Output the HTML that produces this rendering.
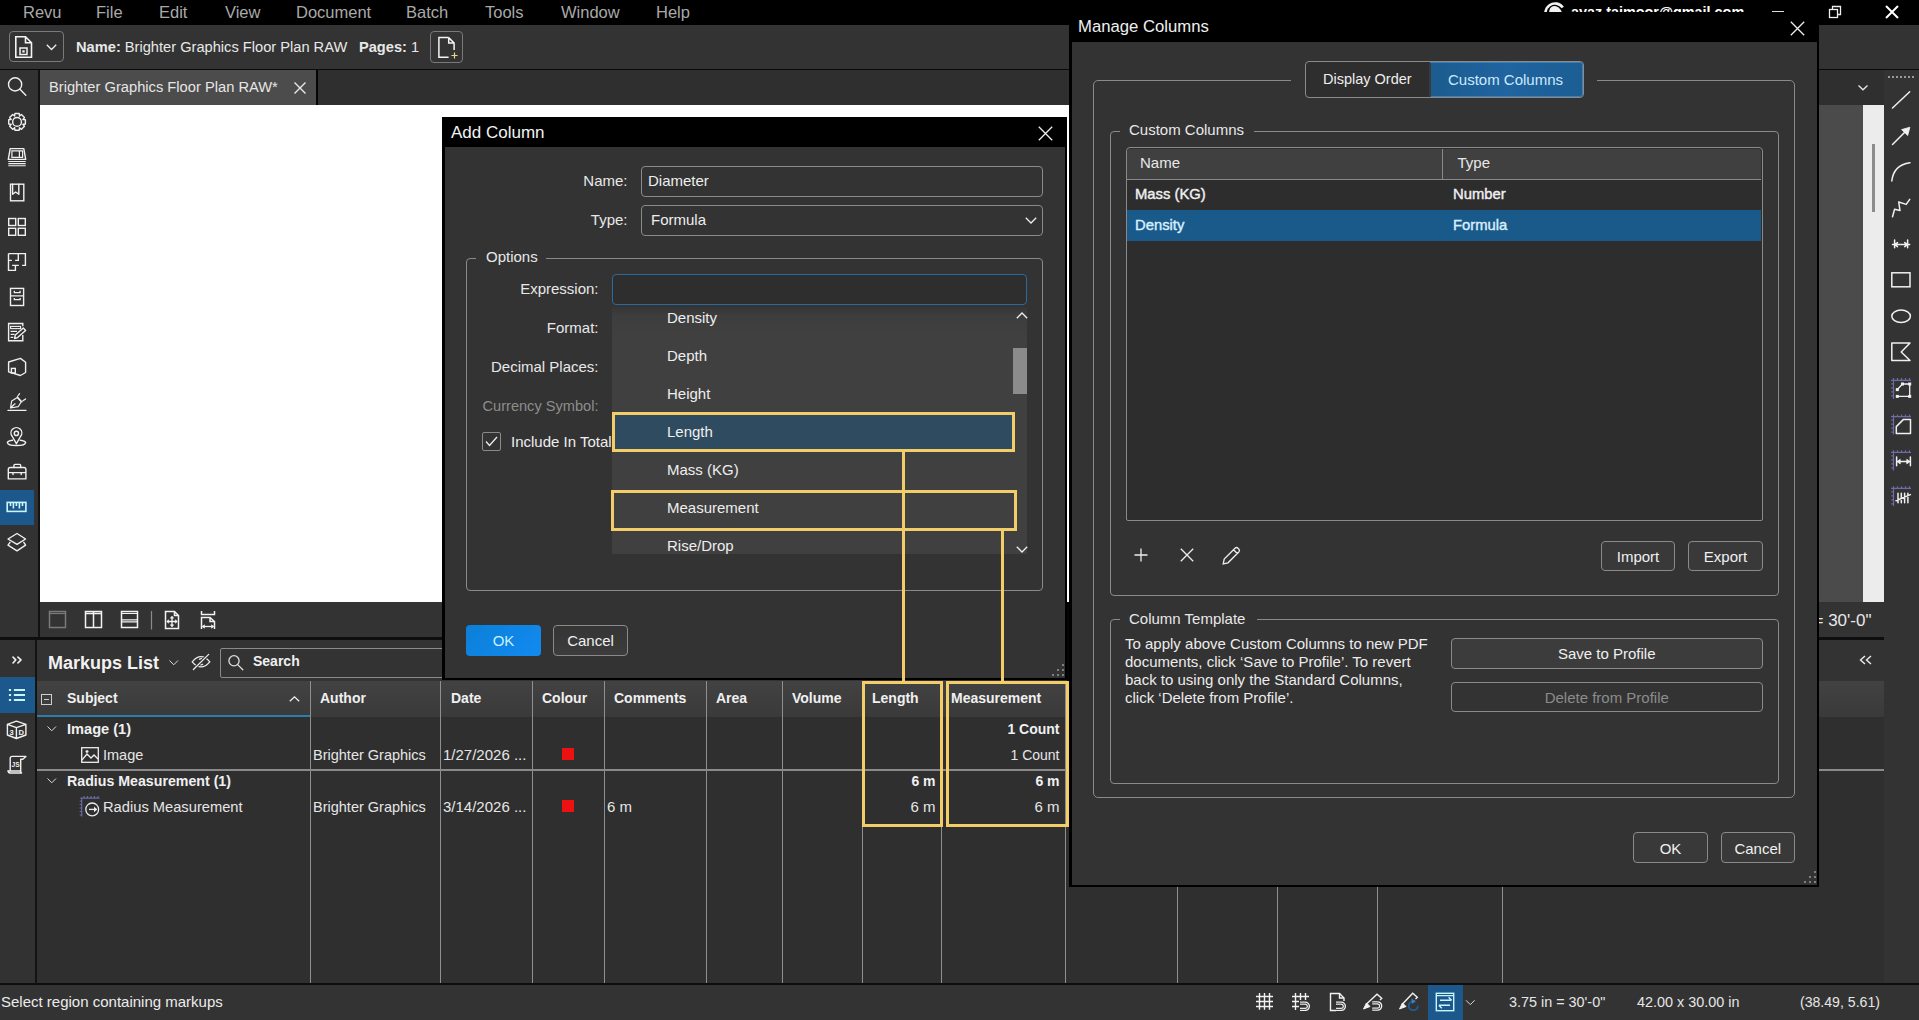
<!DOCTYPE html>
<html><head><meta charset="utf-8">
<style>
*{box-sizing:border-box}
html,body{margin:0;padding:0}
body{width:1919px;height:1020px;overflow:hidden;position:relative;background:#333;font-family:"Liberation Sans",sans-serif;color:#eee;font-size:15px}
.a{position:absolute}
.t{position:absolute;white-space:nowrap;line-height:1}
svg{position:absolute;overflow:visible}
svg .s{fill:none;stroke:#eee;stroke-width:1.3}
</style></head><body>
<div class="a" style="left:0px;top:0px;width:1919px;height:25px;background:#000;"></div>
<div class="t" style="left:23px;top:4.03px;font-size:16.5px;color:#a9a9a9;font-weight:400;">Revu</div>
<div class="t" style="left:96px;top:4.03px;font-size:16.5px;color:#a9a9a9;font-weight:400;">File</div>
<div class="t" style="left:159px;top:4.03px;font-size:16.5px;color:#a9a9a9;font-weight:400;">Edit</div>
<div class="t" style="left:225px;top:4.03px;font-size:16.5px;color:#a9a9a9;font-weight:400;">View</div>
<div class="t" style="left:296px;top:4.03px;font-size:16.5px;color:#a9a9a9;font-weight:400;">Document</div>
<div class="t" style="left:406px;top:4.03px;font-size:16.5px;color:#a9a9a9;font-weight:400;">Batch</div>
<div class="t" style="left:485px;top:4.03px;font-size:16.5px;color:#a9a9a9;font-weight:400;">Tools</div>
<div class="t" style="left:561px;top:4.03px;font-size:16.5px;color:#a9a9a9;font-weight:400;">Window</div>
<div class="t" style="left:656px;top:4.03px;font-size:16.5px;color:#a9a9a9;font-weight:400;">Help</div>
<div class="a" style="left:1540px;top:0;width:230px;height:12px;overflow:hidden">
<svg style="left:3px;top:0" width="24" height="24" viewBox="0 0 24 24"><g transform="rotate(-35 12 13)"><path d="M2.5 13 A9.5 9.5 0 0 1 21.5 13" fill="none" stroke="#f2f2f2" stroke-width="2.6"/><ellipse cx="12.5" cy="13.5" rx="6" ry="7.5" fill="#f2f2f2"/></g></svg>
<div class="t" style="left:31px;top:4.81px;font-size:14.4px;font-weight:700;color:#fff">ayaz.taimoor@gmail.com</div>
</div>
<div class="a" style="left:1772px;top:11px;width:12px;height:1.3000000000000007px;background:#ddd;"></div>
<svg style="left:1828px;top:5px;" width="14" height="14" viewBox="0 0 14 14"><rect x="1.5" y="4.5" width="8" height="8" class="s" stroke-width="1.3"/><path d="M4.5 4.5 V1.5 H12.5 V9.5 H9.5" class="s" stroke-width="1.3"/></svg>
<svg style="left:1885px;top:5px;" width="14" height="14" viewBox="0 0 14 14"><path d="M1 1 L13 13 M13 1 L1 13" stroke="#fff" stroke-width="2" fill="none"/></svg>
<div class="a" style="left:0px;top:25px;width:1919px;height:44px;background:#333;"></div>
<div class="a" style="left:0px;top:68.5px;width:1919px;height:1.5px;background:#0a0a0a;"></div>
<div class="a" style="left:40px;top:70px;width:1844px;height:35px;background:#2f2f2f;"></div>
<div class="a" style="left:9px;top:31px;width:55px;height:31px;border:1px solid #7a7a7a;border-radius:4px;"></div>
<svg style="left:15px;top:36px;" width="18" height="22" viewBox="0 0 18 22"><path d="M0.8 0.8 H10.5 L16.5 6.8 V21.2 H0.8 Z M10.5 0.8 V6.8 H16.5" fill="none" stroke="#f4f4f4" stroke-width="1.6"/><rect x="5" y="12" width="7" height="6.5" fill="none" stroke="#f4f4f4" stroke-width="1.5"/><rect x="7.3" y="14.3" width="2.4" height="2.2" fill="#f4f4f4"/></svg>
<svg style="left:46px;top:44px;" width="11" height="7" viewBox="0 0 11 7"><path d="M0.8 0.8 L5.5 5.5 L10.2 0.8" class="s" stroke-width="1.3"/></svg>
<div class="t" style="left:76px;top:39.6px;font-size:14.65px;color:#e8e8e8;font-weight:400;"><b>Name:</b> Brighter Graphics Floor Plan RAW</div>
<div class="t" style="left:359px;top:39.64px;font-size:14.6px;color:#e8e8e8;font-weight:400;"><b>Pages:</b> 1</div>
<div class="a" style="left:430px;top:31px;width:33px;height:32px;border:1px solid #7a7a7a;border-radius:4px;"></div>
<svg style="left:0px;top:0px;" width="600" height="80" viewBox="0 0 600 80"><path d="M448.7 37.6 H438.9 V57.3 H448.6 M448.7 37.6 L454.1 43 V50 M448.7 37.6 V43 H454.1" fill="none" stroke="#f4f4f4" stroke-width="1.5"/><path d="M454.5 52.4 V58.6 M451.4 55.5 H457.6" stroke="#e9d68a" stroke-width="1.2" fill="none"/></svg>
<div class="a" style="left:40px;top:70px;width:276px;height:35px;background:#4c4c4c;"></div>
<div class="a" style="left:316px;top:70px;width:1.5px;height:35px;background:#050505;"></div>
<div class="t" style="left:49px;top:79.56px;font-size:14.7px;color:#e6e6e6;font-weight:400;">Brighter Graphics Floor Plan RAW*</div>
<svg style="left:293.5px;top:82px;" width="12" height="12" viewBox="0 0 12 12"><path d="M0.5 0.5 L11.5 11.5 M11.5 0.5 L0.5 11.5" class="s" stroke-width="1.1"/></svg>
<svg style="left:1858px;top:84.5px;" width="10" height="6" viewBox="0 0 10 6"><path d="M0.5 0.5 L5 4.8 L9.5 0.5" fill="none" stroke="#e6e6e6" stroke-width="1.3"/></svg>
<div class="a" style="left:0px;top:70px;width:38px;height:567px;background:#323232;"></div>
<div class="a" style="left:38px;top:70px;width:2px;height:567px;background:#121212;"></div>
<div class="a" style="left:40px;top:105px;width:1030px;height:497px;background:#ffffff;"></div>
<div class="a" style="left:1070px;top:105px;width:793px;height:497px;background:#4b4b4b;"></div>
<div class="a" style="left:1863px;top:105px;width:21px;height:497px;background:#ececec;"></div>
<div class="a" style="left:1872px;top:144px;width:3px;height:68px;background:#8c8c8c;"></div>
<div class="a" style="left:1884px;top:70px;width:35px;height:913px;background:#333;"></div>
<div class="a" style="left:1888px;top:76px;width:27px;height:2px;background-image:linear-gradient(90deg,#9a9a9a 50%,transparent 50%);background-size:4px 2px"></div>
<div class="a" style="left:40px;top:602px;width:1844px;height:35px;background:#333;"></div>
<div class="a" style="left:0px;top:637px;width:1884px;height:3px;background:#0e0e0e;"></div>
<div class="t" style="left:1813.5px;top:611.61px;font-size:17px;color:#e8e8e8;font-weight:400;">= 30'-0"</div>
<div class="a" style="left:0px;top:640px;width:35px;height:343px;background:#323232;"></div>
<div class="a" style="left:35px;top:640px;width:2px;height:343px;background:#131313;"></div>
<div class="a" style="left:0px;top:677px;width:35px;height:36px;background:#1d5a8c;"></div>
<div class="t" style="left:48px;top:653.76px;font-size:18px;color:#f2f2f2;font-weight:700;">Markups List</div>
<svg style="left:169px;top:659.5px;" width="10" height="6" viewBox="0 0 10 6"><path d="M0.5 0.5 L4.75 4.8 L9 0.5" fill="none" stroke="#dcdcdc" stroke-width="1"/></svg>
<div class="a" style="left:220px;top:648.3px;width:980px;height:29.700000000000045px;border:1.3px solid #8a8a8a;border-radius:2px;"></div>
<div class="t" style="left:253px;top:654.45px;font-size:14px;color:#f0f0f0;font-weight:700;">Search</div>
<div class="a" style="left:37px;top:717px;width:1847px;height:266px;background:#2f2f2f;"></div>
<div class="a" style="left:37px;top:681px;width:1847px;height:36px;background:linear-gradient(#424242,#3a3a3a)"></div>
<div class="a" style="left:37px;top:715px;width:273px;height:2px;background:#2b7eaa;"></div>
<div class="a" style="left:310px;top:681px;width:1px;height:302px;background:#8f8f8f;"></div>
<div class="a" style="left:440px;top:681px;width:1px;height:302px;background:#8f8f8f;"></div>
<div class="a" style="left:532px;top:681px;width:1px;height:302px;background:#8f8f8f;"></div>
<div class="a" style="left:604px;top:681px;width:1px;height:302px;background:#8f8f8f;"></div>
<div class="a" style="left:706px;top:681px;width:1px;height:302px;background:#8f8f8f;"></div>
<div class="a" style="left:782px;top:681px;width:1px;height:302px;background:#8f8f8f;"></div>
<div class="a" style="left:862px;top:681px;width:1px;height:302px;background:#8f8f8f;"></div>
<div class="a" style="left:941px;top:681px;width:1px;height:302px;background:#8f8f8f;"></div>
<div class="a" style="left:1065px;top:681px;width:1px;height:302px;background:#8f8f8f;"></div>
<div class="a" style="left:1177px;top:681px;width:1px;height:302px;background:#8f8f8f;"></div>
<div class="a" style="left:1277px;top:681px;width:1px;height:302px;background:#8f8f8f;"></div>
<div class="a" style="left:1377px;top:681px;width:1px;height:302px;background:#8f8f8f;"></div>
<div class="a" style="left:1502px;top:681px;width:1px;height:302px;background:#8f8f8f;"></div>
<div class="t" style="left:67px;top:691.15px;font-size:14px;color:#f0f0f0;font-weight:700;">Subject</div>
<div class="t" style="left:320px;top:691.15px;font-size:14px;color:#f0f0f0;font-weight:700;">Author</div>
<div class="t" style="left:451px;top:691.15px;font-size:14px;color:#f0f0f0;font-weight:700;">Date</div>
<div class="t" style="left:542px;top:691.15px;font-size:14px;color:#f0f0f0;font-weight:700;">Colour</div>
<div class="t" style="left:614px;top:691.15px;font-size:14px;color:#f0f0f0;font-weight:700;">Comments</div>
<div class="t" style="left:716px;top:691.15px;font-size:14px;color:#f0f0f0;font-weight:700;">Area</div>
<div class="t" style="left:792px;top:691.15px;font-size:14px;color:#f0f0f0;font-weight:700;">Volume</div>
<div class="t" style="left:872px;top:691.15px;font-size:14px;color:#f0f0f0;font-weight:700;">Length</div>
<div class="t" style="left:951px;top:691.15px;font-size:14px;color:#f0f0f0;font-weight:700;">Measurement</div>
<div class="a" style="left:41px;top:694px;width:11px;height:11px;border:1px solid #cfcfcf;"></div>
<div class="a" style="left:44px;top:699px;width:5px;height:1px;background:#cfcfcf;"></div>
<svg style="left:289px;top:696px;" width="11" height="6" viewBox="0 0 11 6"><path d="M0.8 5.2 L5.5 0.8 L10.2 5.2" class="s" stroke-width="1.1"/></svg>
<div class="a" style="left:37px;top:769px;width:1847px;height:2px;background:#8a8a8a;"></div>
<svg style="left:47px;top:726px;" width="10" height="6" viewBox="0 0 10 6"><path d="M0.5 0.5 L4.75 4.8 L9 0.5" fill="none" stroke="#dcdcdc" stroke-width="1"/></svg>
<div class="t" style="left:67px;top:721.64px;font-size:14.6px;color:#f0f0f0;font-weight:700;">Image (1)</div>
<div class="t" style="left:103px;top:747.73px;font-size:14.5px;color:#e6e6e6;font-weight:400;">Image</div>
<svg style="left:81px;top:747px;" width="18" height="16" viewBox="0 0 18 16"><rect x="0.7" y="0.7" width="16.6" height="14.6" class="s" stroke-width="1.3"/><path d="M1 13 L6 7 L10 11 L13 8 L17 12" class="s" stroke-width="1.2"/><path d="M6 3 V6 M4.5 4.5 H7.5" class="s" stroke-width="1"/></svg>
<div class="t" style="left:313px;top:747.73px;font-size:14.5px;color:#e6e6e6;font-weight:400;">Brighter Graphics</div>
<div class="t" style="left:443px;top:747.3px;font-size:15px;color:#e6e6e6;font-weight:400;">1/27/2026 ...</div>
<div class="a" style="left:562px;top:748px;width:12px;height:12px;background:#ee1111;"></div>
<div class="t" style="right:859.5px;top:722.15px;font-size:14px;color:#f0f0f0;font-weight:700;">1 Count</div>
<div class="t" style="right:859.5px;top:748.15px;font-size:14px;color:#e6e6e6;font-weight:400;">1 Count</div>
<svg style="left:47px;top:778px;" width="10" height="6" viewBox="0 0 10 6"><path d="M0.5 0.5 L4.75 4.8 L9 0.5" fill="none" stroke="#dcdcdc" stroke-width="1"/></svg>
<div class="t" style="left:67px;top:773.98px;font-size:14.2px;color:#f0f0f0;font-weight:700;">Radius Measurement (1)</div>
<div class="t" style="left:103px;top:799.56px;font-size:14.7px;color:#e6e6e6;font-weight:400;">Radius Measurement</div>
<svg style="left:0px;top:0px;" width="1919" height="1020" viewBox="0 0 1919 1020"><path d="M80.3 798.1 H99.5 M81.7 798.1 V816.5 M84 796 V798 M87.5 796 V798 M91 796 V798 M94.5 796 V798 M98 796 V798 M79.7 801 H81.7 M79.7 804.5 H81.7 M79.7 808 H81.7 M79.7 811.5 H81.7 M79.7 815 H81.7" stroke="#6c6ca6" stroke-width="1.1" fill="none"/><circle cx="92.2" cy="809.4" r="6.4" fill="none" stroke="#ececec" stroke-width="1.3"/><path d="M89 809.4 H96.5" fill="none" stroke="#ececec" stroke-width="1.3"/><path d="M94 806.6 L97.2 809.4 L94 812.2 Z" fill="#ececec"/></svg>
<div class="t" style="left:313px;top:799.73px;font-size:14.5px;color:#e6e6e6;font-weight:400;">Brighter Graphics</div>
<div class="t" style="left:443px;top:799.3px;font-size:15px;color:#e6e6e6;font-weight:400;">3/14/2026 ...</div>
<div class="a" style="left:562px;top:800px;width:12px;height:12px;background:#ee1111;"></div>
<div class="t" style="left:607px;top:799.3px;font-size:15px;color:#e6e6e6;font-weight:400;">6 m</div>
<div class="t" style="right:983.5px;top:774.15px;font-size:14px;color:#f0f0f0;font-weight:700;">6 m</div>
<div class="t" style="right:983.5px;top:799.3px;font-size:15px;color:#e6e6e6;font-weight:400;">6 m</div>
<div class="t" style="right:859.5px;top:774.15px;font-size:14px;color:#f0f0f0;font-weight:700;">6 m</div>
<div class="t" style="right:859.5px;top:799.3px;font-size:15px;color:#e6e6e6;font-weight:400;">6 m</div>
<svg style="left:1859px;top:655px;" width="14" height="10" viewBox="0 0 14 10"><path d="M6 1 L1.5 5 L6 9 M12 1 L7.5 5 L12 9" fill="none" stroke="#eee" stroke-width="1.4"/></svg>
<div class="a" style="left:0px;top:983px;width:1919px;height:2px;background:#0e0e0e;"></div>
<div class="a" style="left:0px;top:985px;width:1919px;height:35px;background:#333;"></div>
<div class="t" style="left:1px;top:994.3px;font-size:15px;color:#ececec;font-weight:400;">Select region containing markups</div>
<div class="a" style="left:1428px;top:985px;width:35px;height:35px;background:#1d5a8c;"></div>
<div class="t" style="left:1509px;top:994.81px;font-size:14.4px;color:#e6e6e6;font-weight:400;">3.75 in = 30'-0"</div>
<div class="t" style="left:1637px;top:994.81px;font-size:14.4px;color:#e6e6e6;font-weight:400;">42.00 x 30.00 in</div>
<div class="t" style="left:1800px;top:995.06px;font-size:14.1px;color:#e6e6e6;font-weight:400;">(38.49, 5.61)</div>
<div class="a" style="left:0px;top:490px;width:34px;height:34.60000000000002px;background:#1c588c;"></div>
<div class="a" style="left:0px;top:677.2px;width:34px;height:36.299999999999955px;background:#1c588c;"></div>
<svg style="left:0px;top:0px;" width="40" height="800" viewBox="0 0 40 800">
<circle cx="15.1" cy="84.4" r="6.6" fill="none" stroke="#f0f0f0" stroke-width="1.4" stroke-linejoin="round" stroke-linecap="round"/><path d="M20 89.3 L25.8 95.2" fill="none" stroke="#f0f0f0" stroke-width="1.4" stroke-linejoin="round" stroke-linecap="round"/>
<path d="M25.38 119.77 L25.38 124.03 L22.89 124.51 L23.03 124.19 L24.45 126.29 L21.44 129.30 L19.34 127.88 L19.66 127.74 L19.18 130.23 L14.92 130.23 L14.44 127.74 L14.76 127.88 L12.66 129.30 L9.65 126.29 L11.07 124.19 L11.21 124.51 L8.72 124.03 L8.72 119.77 L11.21 119.29 L11.07 119.61 L9.65 117.51 L12.66 114.50 L14.76 115.92 L14.44 116.06 L14.92 113.57 L19.18 113.57 L19.66 116.06 L19.34 115.92 L21.44 114.50 L24.45 117.51 L23.03 119.61 L22.89 119.29 Z" fill="none" stroke="#f0f0f0" stroke-width="1.4" stroke-linejoin="round" stroke-linecap="round"/><circle cx="17.05" cy="121.9" r="4.4" fill="none" stroke="#f0f0f0" stroke-width="1.4" stroke-linejoin="round" stroke-linecap="round"/>
<path d="M10.2 148.6 H23.8 L25.7 159.4 H8.3 Z" fill="none" stroke="#f0f0f0" stroke-width="1.4" stroke-linejoin="round" stroke-linecap="round"/><path d="M11.9 150.9 H22.6 V157.3 H11.9 Z M19.4 150.9 V157.3" fill="none" stroke="#f0f0f0" stroke-width="1.2"/>
<path d="M8.3 161.5 H25.7 M8.3 163.6 H25.7 M8.3 165.7 H25.7" fill="none" stroke="#f0f0f0" stroke-width="1.1"/>
<rect x="10.5" y="184.2" width="13.3" height="16.6" fill="none" stroke="#f0f0f0" stroke-width="1.4"/><path d="M12.6 184.2 V194.3 L15.7 192 L18.8 194.3 V184.2" fill="none" stroke="#f0f0f0" stroke-width="1.4" stroke-linejoin="round" stroke-linecap="round"/>
<rect x="8.7" y="218.5" width="7" height="7" fill="none" stroke="#f0f0f0" stroke-width="1.4"/><rect x="18.3" y="218.5" width="7" height="7" fill="none" stroke="#f0f0f0" stroke-width="1.4"/><rect x="8.7" y="228.3" width="7" height="7" fill="none" stroke="#f0f0f0" stroke-width="1.4"/><rect x="18.3" y="228.3" width="7" height="7" fill="none" stroke="#f0f0f0" stroke-width="1.4"/>
<path d="M8.5 253.6 H25.4 V265.4 H22.1 M8.5 253.6 V270.4 H15.4 V265.4 M12.1 265.4 H18.8 M18.3 253.6 V260.4 H15.1 M8.5 260.4 H11.8" fill="none" stroke="#f0f0f0" stroke-width="1.4"/>
<rect x="10.5" y="288.4" width="13.1" height="17.1" fill="none" stroke="#f0f0f0" stroke-width="1.4"/><path d="M10.5 295.9 H23.6 M14.3 290.8 V292.6 H20.1 V290.8 M14.3 297.9 V299.7 H20.1 V297.9" fill="none" stroke="#f0f0f0" stroke-width="1.3"/>
<path d="M22.8 326.2 V323.5 H8.6 V340.8 H22.8 V334.9" fill="none" stroke="#f0f0f0" stroke-width="1.4"/><rect x="10.6" y="326.4" width="10" height="2.2" fill="none" stroke="#f0f0f0" stroke-width="1.1"/>
<path d="M10.6 331.3 H17 M10.6 334.3 H14.5 M10.6 337.4 H13.3" fill="none" stroke="#f0f0f0" stroke-width="1.2"/>
<path d="M14.6 338.6 L15.3 335 L23.3 328 L25.6 330.4 L17.6 337.6 Z" fill="none" stroke="#f0f0f0" stroke-width="1.4" stroke-linejoin="round" stroke-linecap="round"/>
<path d="M8.6 362 L20.4 358.4 L25.6 362.3 V372.5 L20.4 375.5 L8.6 371.8 Z" fill="none" stroke="#f0f0f0" stroke-width="1.4" stroke-linejoin="round" stroke-linecap="round"/><rect x="11.4" y="368.4" width="3.9" height="4.6" fill="none" stroke="#f0f0f0" stroke-width="1.4"/>
<path d="M8 410.4 H25.9" fill="none" stroke="#f0f0f0" stroke-width="1.4" stroke-linejoin="round" stroke-linecap="round"/>
<path d="M10.5 408 L11.7 400.9 L17.3 397.5 L21.3 401.8 L18.2 406.7 Z M10.5 408 L14.6 404" fill="none" stroke="#f0f0f0" stroke-width="1.2" stroke-linejoin="round"/>
<path d="M17.3 397 L22 401.8 M17.8 396 L19.6 393.7 M22.9 400.8 L25.6 398.9" fill="none" stroke="#f0f0f0" stroke-width="1.2" stroke-linecap="round"/>
<rect x="14" y="403.2" width="1.6" height="1.6" fill="#bbb"/>
<path d="M16.4 443.7 L12.3 436.5 A5.4 5.4 0 1 1 20.5 436.5 Z" fill="none" stroke="#f0f0f0" stroke-width="1.4" stroke-linejoin="round" stroke-linecap="round"/><circle cx="16.4" cy="433.4" r="2.1" fill="none" stroke="#f0f0f0" stroke-width="1.4" stroke-linejoin="round" stroke-linecap="round"/>
<path d="M12.6 440.2 Q7.4 441 7.4 442.6 Q7.8 445.5 16.4 445.5 Q25.2 445.5 25.6 442.6 Q25.6 441 20.2 440.2" fill="none" stroke="#f0f0f0" stroke-width="1.4" stroke-linejoin="round" stroke-linecap="round"/>
<path d="M13.9 467.5 V465.6 Q13.9 464.4 15.1 464.4 H19.5 Q20.7 464.4 20.7 465.6 V467.5" fill="none" stroke="#f0f0f0" stroke-width="1.4" stroke-linejoin="round" stroke-linecap="round"/>
<path d="M8.3 478.9 V469.5 Q8.3 467.5 10.3 467.5 H23.9 Q25.9 467.5 25.9 469.5 V478.9 Z M8.3 472.6 H25.9 M13 472.6 V474.5 M21.2 472.6 V474.5" fill="none" stroke="#f0f0f0" stroke-width="1.4" stroke-linejoin="round" stroke-linecap="round"/>
<rect x="7.2" y="502.4" width="18.7" height="9" fill="none" stroke="#c8f6ff" stroke-width="1.6"/><path d="M10.5 502.4 V506 M13.4 502.4 V508.5 M16.4 502.4 V506 M19.4 502.4 V508.5 M22.5 502.4 V506" fill="none" stroke="#c8f6ff" stroke-width="1.6"/>
<path d="M8 539 L17 533.5 L25.6 539 L17 544.3 Z" fill="none" stroke="#f0f0f0" stroke-width="1.4" stroke-linejoin="round" stroke-linecap="round"/><path d="M10 542.3 L8 545.2 L17 550.8 L25.6 545.2 L23.8 542.3" fill="none" stroke="#f0f0f0" stroke-width="1.4" stroke-linejoin="round" stroke-linecap="round"/>
<path d="M13 657.1 L15.8 659.9 L13 663 M17.9 657.1 L21 659.9 L17.9 663" fill="none" stroke="#f0f0f0" stroke-width="1.6" stroke-linecap="round" stroke-linejoin="round"/>
<path d="M8.9 690.1 H11.1 M8.9 695 H11.1 M8.9 699.9 H11.1 M13.9 690.1 H25 M13.9 695 H25 M13.9 699.9 H25" fill="none" stroke="#c8f6ff" stroke-width="2"/>
<path d="M7.4 724.3 L16.4 721.2 L25.9 724.3 V735 L16.4 738.5 L7.4 735 Z M7.4 724.3 L16.4 727.7 L25.9 724.3 M16.4 727.7 V738.5" fill="none" stroke="#f0f0f0" stroke-width="1.4" stroke-linejoin="round" stroke-linecap="round"/>
<text x="9.6" y="735" font-family="Liberation Sans" font-weight="700" font-size="7.6" fill="#f0f0f0">3</text><text x="18.4" y="735" font-family="Liberation Sans" font-weight="700" font-size="7.6" fill="#f0f0f0">D</text>
<path d="M10.2 770.5 V758.5 Q10.2 756.4 12.3 756.4 H25.9 L22.8 759.2 H20.7 V772.4 M8 770.6 Q8 773 10 773 H21.6 Q20.7 772.4 20.7 771 H9.5 Q8 771 8 770.6" fill="none" stroke="#f0f0f0" stroke-width="1.4" stroke-linejoin="round" stroke-linecap="round"/>
<text x="11.6" y="767.3" font-family="Liberation Sans" font-weight="700" font-size="6.6" fill="#f0f0f0">JS</text>
</svg>
<svg style="left:40px;top:600px;" width="190" height="40" viewBox="0 0 190 40">
<g transform="translate(-40,-600)">
<rect x="49.5" y="611.5" width="16" height="16" fill="none" stroke="#7a7a7a" stroke-width="1.5"/><path d="M49.5 613.5 H65.5" fill="none" stroke="#7a7a7a" stroke-width="1.2"/>
<rect x="85.5" y="611.5" width="16" height="16" fill="none" stroke="#f2f2f2" stroke-width="1.5"/><path d="M85.5 613.5 H101.5 M93.5 611.5 V627.5" fill="none" stroke="#f2f2f2" stroke-width="1.5"/>
<rect x="121.5" y="611.5" width="16" height="16" fill="none" stroke="#f2f2f2" stroke-width="1.5"/><path d="M121.5 613.5 H137.5 M121.5 619.8 H137.5 M121.5 621.8 H137.5" fill="none" stroke="#f2f2f2" stroke-width="1.2"/>
<path d="M151.5 611 V629.5" fill="none" stroke="#8a8a8a" stroke-width="1.2"/>
<path d="M165.5 611.5 H174.5 L178.5 615.5 V628.5 H165.5 Z M174.5 611.5 V615.5 H178.5" fill="none" stroke="#f2f2f2" stroke-width="1.5"/>
<path d="M172 616.5 V626.5 M167 621.5 H177" fill="none" stroke="#f2f2f2" stroke-width="1.3"/>
<path d="M170.3 618.2 L172 616.2 L173.7 618.2 Z M170.3 624.8 L172 626.8 L173.7 624.8 Z M168.7 619.8 L166.7 621.5 L168.7 623.2 Z M175.3 619.8 L177.3 621.5 L175.3 623.2 Z" fill="#f2f2f2" stroke="#f2f2f2" stroke-width="0.6"/>
<path d="M201.5 611 V614.5 H214.5 V611" fill="none" stroke="#f2f2f2" stroke-width="1.5"/>
<path d="M201.5 629 V617.5 H210 L214.5 621.5 V629 M210 617.5 V621.5 H214.5" fill="none" stroke="#f2f2f2" stroke-width="1.5"/>
<path d="M202.5 626.5 H213.5" fill="none" stroke="#f2f2f2" stroke-width="1.3"/>
<path d="M204.5 624.8 L202.3 626.5 L204.5 628.2 Z M211.5 624.8 L213.7 626.5 L211.5 628.2 Z" fill="#f2f2f2" stroke="#f2f2f2" stroke-width="0.6"/>
</g></svg>
<svg style="left:0px;top:0px;" width="1919" height="1020" viewBox="0 0 1919 1020">
<path d="M192.2 661.8 Q201 651.5 209.8 661.8 Q201 672 192.2 661.8 Z" fill="none" stroke="#ececec" stroke-width="1.3"/>
<path d="M199 659.5 Q200.5 658.3 202 658.6 M200 664.8 Q201.5 665.2 203 664" fill="none" stroke="#ececec" stroke-width="1.2"/>
<path d="M193.4 669.5 L208.7 654.4" fill="none" stroke="#333" stroke-width="3"/>
<path d="M193.4 669.5 L208.7 654.4" fill="none" stroke="#ececec" stroke-width="1.3" stroke-linecap="round"/>
<circle cx="234" cy="660.8" r="5.1" fill="none" stroke="#dedede" stroke-width="1.3"/><path d="M237.7 664.6 L242.8 669.8" fill="none" stroke="#dedede" stroke-width="1.3" stroke-linecap="round"/>
</svg>
<svg style="left:0px;top:0px;" width="1919" height="1020" viewBox="0 0 1919 1020">
<path d="M1892.5 108 L1909.7 91.7" fill="none" stroke="#f0f0f0" stroke-width="1.5" stroke-linecap="round" stroke-linejoin="round"/>
<path d="M1892.5 144.5 L1906 131" fill="none" stroke="#f0f0f0" stroke-width="1.5" stroke-linecap="round" stroke-linejoin="round"/><path d="M1909.9 127.2 L1901.6 129.6 L1907.7 135.5 Z" fill="#f0f0f0" stroke="#f0f0f0" stroke-width="0.8" stroke-linejoin="round"/>
<path d="M1891.8 181 Q1893.5 165 1910 162.7" fill="none" stroke="#f0f0f0" stroke-width="1.5" stroke-linecap="round" stroke-linejoin="round"/>
<path d="M1892.5 216.8 L1894.6 209.2 L1900 210.6 L1898.7 202 L1906.2 204.4 L1909.7 199.3" fill="none" stroke="#f0f0f0" stroke-width="1.5" stroke-linecap="round" stroke-linejoin="round"/>
<path d="M1892.5 244.6 H1909.7 M1894.6 240 V247.7 M1907.6 240 V247.7 M1897.5 242.6 L1894.8 244.6 L1897.5 246.6 M1904.7 242.6 L1907.4 244.6 L1904.7 246.6" fill="none" stroke="#f0f0f0" stroke-width="1.5" stroke-linecap="round" stroke-linejoin="round" stroke-width="1.3"/>
<rect x="1891.8" y="272.8" width="18.2" height="14" fill="none" stroke="#f0f0f0" stroke-width="1.5"/>
<ellipse cx="1901.1" cy="316.2" rx="9.3" ry="6.2" fill="none" stroke="#f0f0f0" stroke-width="1.5" stroke-linecap="round" stroke-linejoin="round"/>
<path d="M1891.8 343 H1910 L1901.2 352 L1910 360.5 H1891.8 Z" fill="none" stroke="#f0f0f0" stroke-width="1.5" stroke-linecap="round" stroke-linejoin="round"/>
<path d="M1891 380.3 H1911 M1893.5 380.3 V399 M1893.5 378.1 V380.3M1897.5 378.1 V380.3M1901.5 378.1 V380.3M1905.5 378.1 V380.3M1909.5 378.1 V380.3 M1891.3 383.8 H1893.5M1891.3 387.8 H1893.5M1891.3 391.8 H1893.5M1891.3 395.8 H1893.5" fill="none" stroke="#6c6ca6" stroke-width="1.2"/>
<path d="M1897.3 389.6 L1902.5 384 H1909.7 V396.4 H1897.3" fill="none" stroke="#f0f0f0" stroke-width="1.3"/>
<rect x="1895.8" y="388.1" width="3" height="3" fill="#f0f0f0"/><rect x="1901" y="382.5" width="3" height="3" fill="#f0f0f0"/><rect x="1908.2" y="382.5" width="3" height="3" fill="#f0f0f0"/><rect x="1908.2" y="394.9" width="3" height="3" fill="#f0f0f0"/><rect x="1895.8" y="394.9" width="3" height="3" fill="#f0f0f0"/>
<path d="M1891 416.7 H1911 M1893.5 416.7 V434.5 M1893.5 414.5 V416.7M1897.5 414.5 V416.7M1901.5 414.5 V416.7M1905.5 414.5 V416.7M1909.5 414.5 V416.7 M1891.3 420.2 H1893.5M1891.3 424.2 H1893.5M1891.3 428.2 H1893.5M1891.3 432.2 H1893.5" fill="none" stroke="#6c6ca6" stroke-width="1.2"/>
<path d="M1896.3 426.6 L1903.5 419.4 H1910.5 V433.5 H1896.3 Z" fill="none" stroke="#f0f0f0" stroke-width="1.5" stroke-linecap="round" stroke-linejoin="round"/>
<path d="M1891 452.4 H1911 M1893.5 452.4 V470.5 M1893.5 450.2 V452.4M1897.5 450.2 V452.4M1901.5 450.2 V452.4M1905.5 450.2 V452.4M1909.5 450.2 V452.4 M1891.3 455.9 H1893.5M1891.3 459.9 H1893.5M1891.3 463.9 H1893.5M1891.3 467.9 H1893.5" fill="none" stroke="#6c6ca6" stroke-width="1.2"/>
<path d="M1896.6 457 V465.7 M1910.4 457 V465.7 M1897 461.6 H1910" fill="none" stroke="#f0f0f0" stroke-width="1.5" stroke-linecap="round" stroke-linejoin="round" stroke-width="1.5"/><path d="M1900.2 459.3 L1897.2 461.6 L1900.2 463.9 Z M1906.8 459.3 L1909.8 461.6 L1906.8 463.9 Z" fill="#f0f0f0" stroke="#f0f0f0" stroke-width="0.8"/>
<path d="M1891 488.4 H1911 M1893.5 488.4 V506 M1893.5 486.2 V488.4M1897.5 486.2 V488.4M1901.5 486.2 V488.4M1905.5 486.2 V488.4M1909.5 486.2 V488.4 M1891.3 491.9 H1893.5M1891.3 495.9 H1893.5M1891.3 499.9 H1893.5M1891.3 503.9 H1893.5" fill="none" stroke="#6c6ca6" stroke-width="1.2"/>
<path d="M1898 493.2 V502.8 M1901.3 493.2 V502.8 M1904.6 493.2 V502.8 M1907.9 493.2 V502.8 M1896 500.7 L1910.4 494.6" fill="none" stroke="#f0f0f0" stroke-width="1.5" stroke-linecap="round" stroke-linejoin="round" stroke-width="1.4"/>
</svg>
<div class="a" style="left:1427.6px;top:985px;width:35.700000000000045px;height:35px;background:#1c588c;"></div>
<svg style="left:0px;top:0px;" width="1919" height="1020" viewBox="0 0 1919 1020">
<path d="M1259.5 993 V1009.8 M1264.5 993 V1009.8 M1269.5 993 V1009.8 M1256 996.5 H1273 M1256 1001.5 H1273 M1256 1006.5 H1273" fill="none" stroke="#f2f2f2" stroke-width="1.4"/>
<path d="M1295.5 993 V1010 M1300.5 993 V1000 M1305.5 993 V1000 M1292 996.5 H1309 M1292 1001.5 H1299 M1292 1006.5 H1299" fill="none" stroke="#f2f2f2" stroke-width="1.4"/>
<path d="M1300 1003.15 H1305.25 A3.15 3.15 0 0 1 1305.25 1009.4499999999999 H1300" fill="none" stroke="#f2f2f2" stroke-width="3.3"/><path d="M1300 1003.15 H1305.25 A3.15 3.15 0 0 1 1305.25 1009.4499999999999 H1300" fill="none" stroke="#333" stroke-width="0.9"/>
<path d="M1336 1010.5 H1330.5 V993.5 H1339.5 L1344 998 V1001" fill="none" stroke="#f2f2f2" stroke-width="1.4"/><path d="M1339.5 993.5 V998 H1344" fill="none" stroke="#f2f2f2" stroke-width="1.4"/>
<path d="M1336 1003.15 H1341.25 A3.15 3.15 0 0 1 1341.25 1009.4499999999999 H1336" fill="none" stroke="#f2f2f2" stroke-width="3.3"/><path d="M1336 1003.15 H1341.25 A3.15 3.15 0 0 1 1341.25 1009.4499999999999 H1336" fill="none" stroke="#333" stroke-width="0.9"/>
<path d="M1366 1004.5 L1377 994.3 L1381.7 998.3 L1380 1000" fill="none" stroke="#f2f2f2" stroke-width="1.4"/><path d="M1363.5 1009 L1366.5 1003 L1370 1006.5 Z" fill="#f2f2f2" stroke="#f2f2f2" stroke-width="1"/>
<path d="M1372.3 1002.85 H1377.55 A3.15 3.15 0 0 1 1377.55 1009.15 H1372.3" fill="none" stroke="#f2f2f2" stroke-width="3.3"/><path d="M1372.3 1002.85 H1377.55 A3.15 3.15 0 0 1 1377.55 1009.15 H1372.3" fill="none" stroke="#333" stroke-width="0.9"/>
<path d="M1402 1004.5 L1412.7 993.3 L1417.3 997.3 L1415.5 999" fill="none" stroke="#f2f2f2" stroke-width="1.4"/><path d="M1399.5 1009 L1402.5 1003 L1406 1006.5 Z" fill="#f2f2f2" stroke="#f2f2f2" stroke-width="1"/>
<path d="M1417.8 1005.7 A4.5 4.5 0 1 1 1413.3 1001.2" fill="none" stroke="#1f5e96" stroke-width="1.8"/><path d="M1411.5 998.5 L1416 1001.2 L1411.8 1004" fill="#3a7fc0"/>
<rect x="1436.3" y="993.3" width="17.4" height="17.4" fill="none" stroke="#c8f6ff" stroke-width="1.4"/>
<path d="M1436.3 995.6 H1453.7 M1440 1000.3 H1451.5 M1448.6 997.3 L1451.6 1000.3 M1450 1005.3 H1439 M1441.8 1008.3 L1438.8 1005.3" fill="none" stroke="#c8f6ff" stroke-width="1.4"/>
<path d="M1466 1000.3 L1470.3 1004.6 L1474.7 1000.3" fill="none" stroke="#dcdcdc" stroke-width="1"/>
</svg>
<div class="a" style="left:442px;top:117px;width:625px;height:562.5px;background:#000;"></div>
<div class="a" style="left:444.5px;top:147px;width:620.5px;height:530.5px;background:#333;"></div>
<div class="t" style="left:451px;top:123.61px;font-size:17px;color:#f2f2f2;font-weight:400;">Add Column</div>
<svg style="left:1038px;top:126px;" width="15" height="15" viewBox="0 0 15 15"><path d="M0.8 0.8 L14.2 14.2 M14.2 0.8 L0.8 14.2" class="s" stroke-width="1.4"/></svg>
<div class="a" style="left:1067px;top:105px;width:2px;height:497px;background:#fff;"></div>
<div class="a" style="left:1067px;top:602px;width:2px;height:79px;background:#050505;"></div>
<div class="t" style="right:1291.5px;top:173.3px;font-size:15px;color:#e8e8e8;font-weight:400;">Name:</div>
<div class="a" style="left:641px;top:166px;width:402px;height:31px;border:1.5px solid #8a8a8a;border-radius:4px;"></div>
<div class="t" style="left:648px;top:173.3px;font-size:15px;color:#eeeeee;font-weight:400;">Diameter</div>
<div class="t" style="right:1291.5px;top:212.3px;font-size:15px;color:#e8e8e8;font-weight:400;">Type:</div>
<div class="a" style="left:641px;top:205px;width:402px;height:31px;border:1.5px solid #8a8a8a;border-radius:4px;"></div>
<div class="t" style="left:651px;top:212.3px;font-size:15px;color:#eeeeee;font-weight:400;">Formula</div>
<svg style="left:1025px;top:217px;" width="12" height="7" viewBox="0 0 12 7"><path d="M0.8 0.8 L6 6 L11.2 0.8" class="s" stroke-width="1.4"/></svg>
<div class="a" style="left:466px;top:257.5px;width:577px;height:333.0px;border:1.5px solid #8a8a8a;border-radius:4px;"></div>
<div class="a" style="left:476px;top:250px;width:70px;height:12px;background:#333;"></div>
<div class="t" style="left:486px;top:249.3px;font-size:15px;color:#e8e8e8;font-weight:400;">Options</div>
<div class="t" style="right:1320.5px;top:280.8px;font-size:15px;color:#e8e8e8;font-weight:400;">Expression:</div>
<div class="t" style="right:1320.5px;top:320.3px;font-size:15px;color:#e8e8e8;font-weight:400;">Format:</div>
<div class="t" style="right:1320.5px;top:359.3px;font-size:15px;color:#e8e8e8;font-weight:400;">Decimal Places:</div>
<div class="t" style="right:1320.5px;top:398.64px;font-size:14.6px;color:#8d8d8d;font-weight:400;">Currency Symbol:</div>
<div class="a" style="left:482px;top:432px;width:19px;height:19px;border:1.3px solid #8a8a8a;border-radius:2px;"></div>
<svg style="left:485px;top:436px;" width="13" height="11" viewBox="0 0 13 11"><path d="M1 5.5 L4.5 9.5 L12 1" class="s" stroke-width="1.3"/></svg>
<div class="t" style="left:511px;top:434.3px;font-size:15px;color:#eeeeee;font-weight:400;">Include In Total</div>
<div class="a" style="left:612px;top:274px;width:415px;height:31px;background:#2e2e2e;border:1.5px solid #2a6a9c;border-radius:4px;"></div>
<div class="a" style="left:612px;top:305px;width:415px;height:249px;background:linear-gradient(#333 0px,#3d3d3d 10px,#404040 30px)"></div>
<div class="a" style="left:1013px;top:348px;width:14px;height:46px;background:#8b8b8b;"></div>
<svg style="left:1016px;top:312px;" width="12" height="7" viewBox="0 0 12 7"><path d="M0.8 6.2 L6 1 L11.2 6.2" class="s" stroke-width="1.4"/></svg>
<svg style="left:1016px;top:546px;" width="12" height="7" viewBox="0 0 12 7"><path d="M0.8 0.8 L6 6 L11.2 0.8" class="s" stroke-width="1.4"/></svg>
<div class="a" style="left:612px;top:412px;width:402px;height:40px;background:#2f4b5f;"></div>
<div class="t" style="left:667px;top:310.3px;font-size:15px;color:#eeeeee;font-weight:400;">Density</div>
<div class="t" style="left:667px;top:348.3px;font-size:15px;color:#eeeeee;font-weight:400;">Depth</div>
<div class="t" style="left:667px;top:386.3px;font-size:15px;color:#eeeeee;font-weight:400;">Height</div>
<div class="t" style="left:667px;top:424.3px;font-size:15px;color:#eeeeee;font-weight:400;">Length</div>
<div class="t" style="left:667px;top:462.3px;font-size:15px;color:#eeeeee;font-weight:400;">Mass (KG)</div>
<div class="t" style="left:667px;top:500.3px;font-size:15px;color:#eeeeee;font-weight:400;">Measurement</div>
<div class="t" style="left:667px;top:538.3px;font-size:15px;color:#eeeeee;font-weight:400;">Rise/Drop</div>
<div class="a" style="left:466px;top:625px;width:75px;height:31px;background:linear-gradient(135deg,#0b7fd8,#128af0);border-radius:4px;"></div>
<div class="t" style="left:3.5px;width:1000px;text-align:center;top:633.3px;font-size:15px;color:#c9f1ff;font-weight:400;">OK</div>
<div class="a" style="left:553px;top:625px;width:75px;height:31px;background:linear-gradient(#353535,#3c3c3c);border:1.5px solid #8a8a8a;border-radius:4px;"></div>
<div class="t" style="left:90.5px;width:1000px;text-align:center;top:633.3px;font-size:15px;color:#f0f0f0;font-weight:400;">Cancel</div>
<div class="a" style="left:1069px;top:12px;width:750px;height:875px;background:#000;"></div>
<div class="a" style="left:1071.5px;top:42px;width:745.0px;height:842.5px;background:#333;"></div>
<div class="t" style="left:1078px;top:18.86px;font-size:16.7px;color:#f0f0f0;font-weight:400;">Manage Columns</div>
<svg style="left:1790px;top:21px;" width="15" height="15" viewBox="0 0 15 15"><path d="M0.8 0.8 L14.2 14.2 M14.2 0.8 L0.8 14.2" class="s" stroke-width="1.4"/></svg>
<div class="a" style="left:1093px;top:80px;width:702px;height:717.5px;border:1.5px solid #8a8a8a;border-radius:5px;"></div>
<div class="a" style="left:1291px;top:76px;width:306px;height:8px;background:#333;"></div>
<div class="a" style="left:1305px;top:61px;width:278.5px;height:37.3px;background:#2e2e2e;border:1.5px solid #8a8a8a;border-radius:4px;"></div>
<div class="a" style="left:1430px;top:62px;width:152.5px;height:35.3px;background:linear-gradient(90deg,#1b5b8e,#2064a0 50%,#1b5e94);border-radius:0 3px 3px 0;border:1px solid #3f7fb5;border-left:none"></div>
<div class="a" style="left:1429px;top:62.5px;width:1.5px;height:34.5px;background:#3a3a3a;"></div>
<div class="t" style="left:1323px;top:72.33px;font-size:14.5px;color:#eeeeee;font-weight:400;">Display Order</div>
<div class="t" style="left:1448px;top:71.9px;font-size:15px;color:#cfe9fb;font-weight:400;">Custom Columns</div>
<div class="a" style="left:1110px;top:130.5px;width:669px;height:465.5px;border:1.5px solid #8a8a8a;border-radius:4px;"></div>
<div class="a" style="left:1120px;top:124px;width:134px;height:12px;background:#333;"></div>
<div class="t" style="left:1129px;top:122.3px;font-size:15px;color:#e8e8e8;font-weight:400;">Custom Columns</div>
<div class="a" style="left:1125.5px;top:147px;width:637.0px;height:373.5px;background:#2d2d2d;border:1.5px solid #8a8a8a;border-radius:4px 4px 2px 2px;"></div>
<div class="a" style="left:1127px;top:148.5px;width:634px;height:30.5px;background:#404040;border-radius:3px 3px 0 0;"></div>
<div class="a" style="left:1127px;top:178.5px;width:634px;height:1.5px;background:#8a8a8a;"></div>
<div class="a" style="left:1442px;top:148.5px;width:1.2999999999999545px;height:30.5px;background:#8a8a8a;"></div>
<div class="t" style="left:1140px;top:154.8px;font-size:15px;color:#e8e8e8;font-weight:400;">Name</div>
<div class="t" style="left:1457.5px;top:154.8px;font-size:15px;color:#e8e8e8;font-weight:400;">Type</div>
<div class="t" style="left:1135px;top:186.97px;font-size:14.8px;color:#f0f0f0;font-weight:400;-webkit-text-stroke:0.4px #f0f0f0">Mass (KG)</div>
<div class="t" style="left:1453px;top:186.97px;font-size:14.8px;color:#f0f0f0;font-weight:400;-webkit-text-stroke:0.4px #f0f0f0">Number</div>
<div class="a" style="left:1127px;top:209.5px;width:634px;height:31.0px;background:#1a5a8a;"></div>
<div class="t" style="left:1135px;top:217.97px;font-size:14.8px;color:#d8efff;font-weight:400;-webkit-text-stroke:0.4px #d8efff">Density</div>
<div class="t" style="left:1453px;top:217.97px;font-size:14.8px;color:#d8efff;font-weight:400;-webkit-text-stroke:0.4px #d8efff">Formula</div>
<svg style="left:1134px;top:548px;" width="14" height="14" viewBox="0 0 14 14"><path d="M7 0.5 V13.5 M0.5 7 H13.5" class="s" stroke-width="1.4"/></svg>
<svg style="left:1179.5px;top:548px;" width="14" height="14" viewBox="0 0 14 14"><path d="M0.8 0.8 L13.2 13.2 M13.2 0.8 L0.8 13.2" class="s" stroke-width="1.4"/></svg>
<svg style="left:1222px;top:546px;" width="19" height="19" viewBox="0 0 19 19"><path d="M1.2 17.8 L2.2 13 L13 2.2 Q14.5 0.8 16 2.2 L16.8 3 Q18.2 4.5 16.8 6 L6 16.8 Z M11.5 3.7 L15.3 7.5" class="s" stroke-width="1.4"/></svg>
<div class="a" style="left:1601px;top:540.5px;width:74px;height:30.5px;background:#393939;border:1.5px solid #8a8a8a;border-radius:4px;"></div>
<div class="t" style="left:1138px;width:1000px;text-align:center;top:549.3px;font-size:15px;color:#f0f0f0;font-weight:400;">Import</div>
<div class="a" style="left:1688px;top:540.5px;width:75px;height:30.5px;background:#393939;border:1.5px solid #8a8a8a;border-radius:4px;"></div>
<div class="t" style="left:1225.5px;width:1000px;text-align:center;top:549.3px;font-size:15px;color:#f0f0f0;font-weight:400;">Export</div>
<div class="a" style="left:1110px;top:619px;width:669px;height:165px;border:1.5px solid #8a8a8a;border-radius:4px;"></div>
<div class="a" style="left:1120px;top:612px;width:137px;height:13px;background:#333;"></div>
<div class="t" style="left:1129px;top:611.3px;font-size:15px;color:#e8e8e8;font-weight:400;">Column Template</div>
<div class="t" style="left:1125px;top:636.3px;font-size:15px;color:#ececec;font-weight:400;">To apply above Custom Columns to new PDF</div>
<div class="t" style="left:1125px;top:654.3px;font-size:15px;color:#ececec;font-weight:400;">documents, click &#8216;Save to Profile&#8217;. To revert</div>
<div class="t" style="left:1125px;top:672.3px;font-size:15px;color:#ececec;font-weight:400;">back to using only the Standard Columns,</div>
<div class="t" style="left:1125px;top:690.3px;font-size:15px;color:#ececec;font-weight:400;">click &#8216;Delete from Profile&#8217;.</div>
<div class="a" style="left:1450.5px;top:638px;width:312.5px;height:30.5px;background:#3c3c3c;border:1.5px solid #8a8a8a;border-radius:4px;"></div>
<div class="t" style="left:1106.75px;width:1000px;text-align:center;top:646.3px;font-size:15px;color:#f0f0f0;font-weight:400;">Save to Profile</div>
<div class="a" style="left:1450.5px;top:681.5px;width:312.5px;height:30.5px;background:#333;border:1.5px solid #8a8a8a;border-radius:4px;"></div>
<div class="t" style="left:1106.75px;width:1000px;text-align:center;top:689.8px;font-size:15px;color:#8c8c8c;font-weight:400;">Delete from Profile</div>
<div class="a" style="left:1633px;top:832px;width:75px;height:31px;background:#393939;border:1.5px solid #8a8a8a;border-radius:4px;"></div>
<div class="t" style="left:1170.5px;width:1000px;text-align:center;top:840.8px;font-size:15px;color:#f0f0f0;font-weight:400;">OK</div>
<div class="a" style="left:1720.5px;top:832px;width:74.5px;height:31px;background:#393939;border:1.5px solid #8a8a8a;border-radius:4px;"></div>
<div class="t" style="left:1257.75px;width:1000px;text-align:center;top:840.8px;font-size:15px;color:#f0f0f0;font-weight:400;">Cancel</div>
<div class="a" style="left:1819px;top:769px;width:65px;height:2px;background:#8a8a8a;"></div>
<div class="a" style="left:612px;top:412px;width:402.5px;height:40px;border:3px solid #f2cd68;"></div>
<div class="a" style="left:611px;top:490px;width:406px;height:40.5px;border:3px solid #f2cd68;"></div>
<div class="a" style="left:902px;top:452px;width:3px;height:229px;background:#f2cd68;"></div>
<div class="a" style="left:1000.5px;top:530px;width:3.0px;height:151px;background:#f2cd68;"></div>
<div class="a" style="left:862px;top:681px;width:80.5px;height:146px;border:3px solid #f2cd68;"></div>
<div class="a" style="left:945.5px;top:681px;width:123.5px;height:146px;border:3px solid #f2cd68;"></div>
<div class="a" style="left:1061.5px;top:674px;width:2.0px;height:2px;background:#9a9a9a;border-radius:1px"></div>
<div class="a" style="left:1061.5px;top:669px;width:2.0px;height:2px;background:#9a9a9a;border-radius:1px"></div>
<div class="a" style="left:1056.5px;top:674px;width:2.0px;height:2px;background:#9a9a9a;border-radius:1px"></div>
<div class="a" style="left:1061.5px;top:664px;width:2.0px;height:2px;background:#9a9a9a;border-radius:1px"></div>
<div class="a" style="left:1056.5px;top:669px;width:2.0px;height:2px;background:#9a9a9a;border-radius:1px"></div>
<div class="a" style="left:1051.5px;top:674px;width:2.0px;height:2px;background:#9a9a9a;border-radius:1px"></div>
<div class="a" style="left:1813.5px;top:881px;width:2.0px;height:2px;background:#9a9a9a;border-radius:1px"></div>
<div class="a" style="left:1813.5px;top:876px;width:2.0px;height:2px;background:#9a9a9a;border-radius:1px"></div>
<div class="a" style="left:1808.5px;top:881px;width:2.0px;height:2px;background:#9a9a9a;border-radius:1px"></div>
<div class="a" style="left:1813.5px;top:871px;width:2.0px;height:2px;background:#9a9a9a;border-radius:1px"></div>
<div class="a" style="left:1808.5px;top:876px;width:2.0px;height:2px;background:#9a9a9a;border-radius:1px"></div>
<div class="a" style="left:1803.5px;top:881px;width:2.0px;height:2px;background:#9a9a9a;border-radius:1px"></div>
</body></html>
